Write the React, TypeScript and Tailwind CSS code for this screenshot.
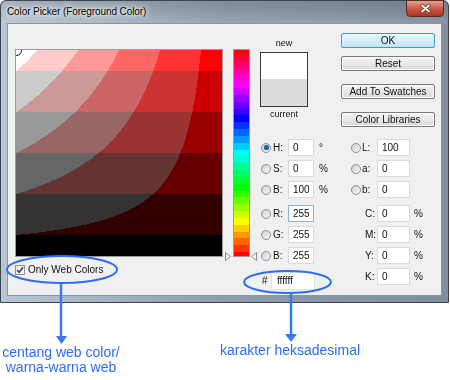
import React, { useEffect, useRef } from "react";

// snap a channel to the web-safe steps (00, 33, 66, 99, cc, ff)
const snap = (v: number) => Math.round(v / 51) * 51;

function hueRgb(h: number) {
  const f = (n: number) => {
    const k = (n + h / 60) % 6;
    return 255 * (1 - Math.max(0, Math.min(k, 4 - k, 1)));
  };
  return [f(5), f(3), f(1)];
}

function ColorField() {
  const ref = useRef<HTMLCanvasElement>(null);
  useEffect(() => {
    const c = ref.current;
    if (!c) return;
    const ctx = c.getContext("2d");
    if (!ctx) return;
    const w = c.width;
    const h = c.height;
    const img = ctx.createImageData(w, h);
    for (let y = 0; y < h; y++) {
      for (let x = 0; x < w; x++) {
        const s = x / (w - 1);
        const b = 1 - y / (h - 1);
        const r = snap(b * 255);
        const g = snap(b * (1 - s) * 255);
        const i = (y * w + x) * 4;
        img.data[i] = r;
        img.data[i + 1] = g;
        img.data[i + 2] = g;
        img.data[i + 3] = 255;
      }
    }
    ctx.putImageData(img, 0, 0);
    ctx.strokeStyle = "#111";
    ctx.lineWidth = 1;
    ctx.beginPath();
    ctx.arc(0.5, 0.5, 5, 0, Math.PI * 2);
    ctx.stroke();
  }, []);
  return <canvas ref={ref} width={206} height={206} className="block" />;
}

function HueBar() {
  const ref = useRef<HTMLCanvasElement>(null);
  useEffect(() => {
    const c = ref.current;
    if (!c) return;
    const ctx = c.getContext("2d");
    if (!ctx) return;
    for (let y = 0; y < c.height; y++) {
      const [r, g, b] = hueRgb(360 * (1 - y / (c.height - 1)));
      ctx.fillStyle = `rgb(${snap(r)},${snap(g)},${snap(b)})`;
      ctx.fillRect(0, y, c.width, 1);
    }
  }, []);
  return <canvas ref={ref} width={15} height={206} className="block" />;
}

function Radio({ on }: { on?: boolean }) {
  return (
    <span className="w-[10px] h-[10px] shrink-0 rounded-full border border-[#8e8f8f] bg-linear-to-br from-[#cfcfcf] to-[#f8f8f8] flex items-center justify-center">
      {on && <span className="w-[5px] h-[5px] rounded-full bg-[#22619c] shadow-[0_0_1px_#5aa0e0]" />}
    </span>
  );
}

function Field({ value, w, focus }: { value: string; w: string; focus?: boolean }) {
  return (
    <div
      className={`${w} h-[17px] shrink-0 bg-white border ${
        focus ? "border-[#8db2d8]" : "border-[#d9d9d9]"
      } flex items-center pl-[4px] text-[10px] leading-none`}
    >
      {value}
    </div>
  );
}

function Btn({ label, primary }: { label: string; primary?: boolean }) {
  return (
    <div
      className={`w-[94px] h-[15px] rounded-[2px] border flex items-center justify-center text-[10px] leading-none ${
        primary
          ? "border-[#3c9bd8] bg-linear-to-b from-[#ecf7fd] to-[#c2e4f6]"
          : "border-[#7a7a7a] bg-linear-to-b from-[#f4f4f4] to-[#dadada] shadow-[inset_0_0_0_1px_#fbfbfb]"
      }`}
    >
      {label}
    </div>
  );
}

function LeftRow({ r, label, value, unit, focus }: { r?: boolean; label: string; value: string; unit?: string; focus?: boolean }) {
  return (
    <div className="h-[21px] flex items-center">
      <Radio on={r} />
      <span className="ml-[2px] w-[15px] text-[10px] leading-none">{label}</span>
      <Field value={value} w="w-[26px]" focus={focus} />
      <span className="ml-[5px] w-[12px] text-[10px] leading-none">{unit}</span>
    </div>
  );
}

function RightRow({ label, value, unit, radio }: { label: string; value: string; unit?: string; radio?: boolean }) {
  return (
    <div className="h-[21px] flex items-center">
      {radio ? <Radio /> : <span className="w-[10px] shrink-0" />}
      <span className={`w-[16px] text-[10px] leading-none ${radio ? "pl-[1px]" : "pl-[4px]"}`}>{label}</span>
      <Field value={value} w="w-[33px]" />
      <span className="ml-[4px] text-[10px] leading-none">{unit}</span>
    </div>
  );
}

export default function App() {
  return (
    <div className="relative w-[450px] h-[380px] overflow-hidden bg-white font-['Liberation_Sans',Arial,sans-serif] text-[#111]">
      {/* dialog window */}
      <div className="w-[449px] h-[303px] rounded-t-[6px] border border-[#3b4552] bg-linear-to-r from-[#b9c5d1] via-[#8e9cad] to-[#7f8d9e] flex flex-col">
        <div className="h-[22px] flex items-start justify-between pl-[6px] pr-[4px] bg-linear-to-b from-black/10 to-white/10">
          <span className="mt-[5px] text-[10px] leading-[12px] tracking-[-0.1px] text-black [text-shadow:0_0_6px_#fff,0_0_10px_#fff,0_0_3px_#fff]">
            Color Picker (Foreground Color)
          </span>
          <div className="-mt-px w-[38px] h-[17px] rounded-b-[4px] border border-[#5b2a22] bg-linear-to-b from-[#e2a293] via-[#c95a48] to-[#a9331f] flex items-center justify-center">
            <svg width="11" height="9" viewBox="0 0 11 9">
              <path d="M2 1.5 L9 7.5 M9 1.5 L2 7.5" stroke="#5b2a22" strokeWidth="3.2" strokeLinecap="round" />
              <path d="M2 1.5 L9 7.5 M9 1.5 L2 7.5" stroke="#fff" strokeWidth="1.8" strokeLinecap="round" />
            </svg>
          </div>
        </div>

        <div className="mx-[6px] mb-[6px] flex-1 border border-[#8a96a3] bg-[#f0f0f0] pt-[9px] pl-[7px] flex items-start">
          {/* colour field + checkbox */}
          <div className="w-[208px] mt-[16px] flex flex-col">
            <div className="border border-[#9c9c9c]">
              <ColorField />
            </div>
            <div className="mt-[8px] flex items-center">
              <span className="w-[10px] h-[10px] border border-[#8e8f8f] bg-linear-to-br from-[#e4e4e4] to-white flex items-center justify-center">
                <svg width="8" height="8" viewBox="0 0 8 8">
                  <path d="M1 4 L3.2 6.3 L7 1.2" stroke="#2b3f6a" strokeWidth="1.5" fill="none" />
                </svg>
              </span>
              <span className="ml-[3px] text-[10px] leading-none">Only Web Colors</span>
            </div>
          </div>

          {/* hue slider */}
          <div className="relative ml-[10px] mt-[16px] w-[17px] border border-[#9c9c9c]">
            <HueBar />
            <svg className="absolute left-[-9px] bottom-[-5px]" width="6" height="9" viewBox="0 0 6 9">
              <path d="M0.5 0.5 L5.5 4.5 L0.5 8.5 Z" fill="#fff" stroke="#8a8a8a" />
            </svg>
            <svg className="absolute right-[-8px] bottom-[-5px]" width="6" height="9" viewBox="0 0 6 9">
              <path d="M5.5 0.5 L0.5 4.5 L5.5 8.5 Z" fill="#fff" stroke="#8a8a8a" />
            </svg>
          </div>

          {/* swatch, buttons and values */}
          <div className="flex flex-col">
            <div className="h-[104px] flex items-start">
              <div className="ml-[10px] w-[48px] flex flex-col items-center">
                <span className="mt-[4px] h-[12px] text-[9px] leading-[12px]">new</span>
                <div className="mt-[3px] w-[48px] h-[55px] border border-[#3a3a3a] flex flex-col">
                  <div className="h-[26px] bg-white" />
                  <div className="flex-1 bg-[#dcdcdc]" />
                </div>
                <span className="mt-[1px] h-[12px] text-[9px] leading-[12px]">current</span>
              </div>
              <div className="ml-[33px] flex flex-col">
                <Btn label="OK" primary />
                <div className="mt-[8px]"><Btn label="Reset" /></div>
                <div className="mt-[13px]"><Btn label="Add To Swatches" /></div>
                <div className="mt-[13px]"><Btn label="Color Libraries" /></div>
              </div>
            </div>

            <div className="flex items-start">
              <div className="pl-[11px] flex flex-col">
                <LeftRow r label="H:" value="0" unit="°" />
                <LeftRow label="S:" value="0" unit="%" />
                <LeftRow label="B:" value="100" unit="%" />
                <div className="mt-[3px]">
                  <LeftRow label="R:" value="255" focus />
                  <LeftRow label="G:" value="255" />
                  <LeftRow label="B:" value="255" />
                </div>
                <div className="mt-[4px] h-[21px] flex items-center">
                  <span className="ml-[1px] w-[9px] text-[10px] leading-none">#</span>
                  <div className="w-[44px] h-[18px] bg-white border border-[#e2e2e2] flex items-center pl-[5px] text-[10px] leading-none">
                    ffffff
                  </div>
                </div>
              </div>
              <div className="ml-[20px] flex flex-col">
                <RightRow radio label="L:" value="100" />
                <RightRow radio label="a:" value="0" />
                <RightRow radio label="b:" value="0" />
                <div className="mt-[3px]">
                  <RightRow label="C:" value="0" unit="%" />
                  <RightRow label="M:" value="0" unit="%" />
                  <RightRow label="Y:" value="0" unit="%" />
                  <RightRow label="K:" value="0" unit="%" />
                </div>
              </div>
            </div>
          </div>
        </div>
      </div>

      {/* captions below the dialog */}
      <div className="flex items-start text-[14px] leading-[15px] text-[#2f6cf2]">
        <div className="w-[122px] mt-[42px] text-center">
          centang web color/
          <br />
          warna-warna web
        </div>
        <div className="ml-[88px] w-[160px] mt-[40px] text-center">karakter heksadesimal</div>
      </div>

      {/* annotation marks drawn over the dialog */}
      <svg className="absolute left-0 top-0 pointer-events-none" width="450" height="380">
        <ellipse cx="62" cy="269.5" rx="55" ry="13.5" fill="none" stroke="#2d6ef0" strokeWidth="2" />
        <line x1="61" y1="283" x2="61" y2="338" stroke="#3a78fa" strokeWidth="2.5" />
        <path d="M56 336 L67 336 L61.5 344 Z" fill="#3a78fa" />
        <ellipse cx="287.5" cy="282" rx="43.5" ry="11" fill="none" stroke="#2d6ef0" strokeWidth="2" />
        <line x1="291" y1="293" x2="291" y2="336" stroke="#3a78fa" strokeWidth="2.5" />
        <path d="M285 334 L297 334 L291 342 Z" fill="#3a78fa" />
      </svg>
    </div>
  );
}
